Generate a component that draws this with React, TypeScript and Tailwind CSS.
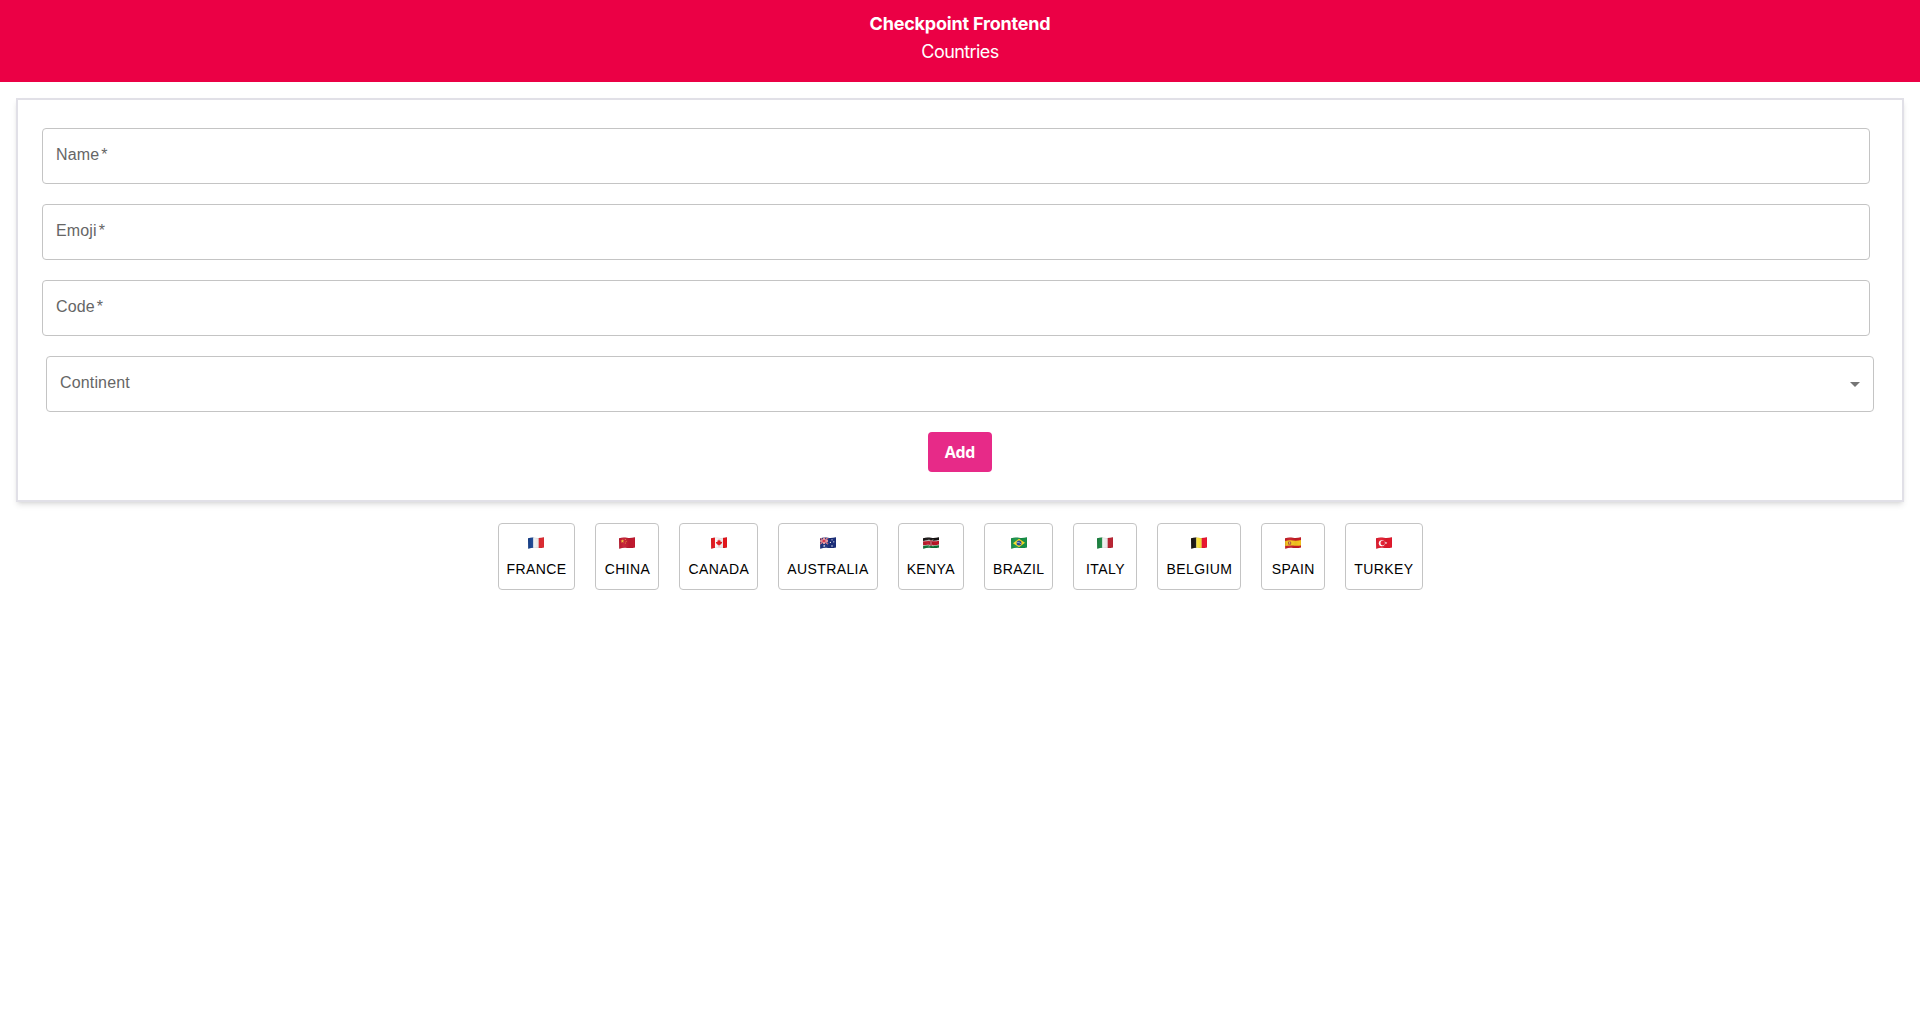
import React, { useId } from "react";

const WAVE = "M0 1.2C3 0.4 5 0.4 8 0.8S13 0.9 16 0.2V10.4C13 11.3 11 11.2 8 10.9S3 10.9 0.2 11.7Z";

const star = (cx: number, cy: number, r: number) =>
  Array.from({ length: 10 }, (_, i) => {
    const a = (Math.PI * i) / 5 - Math.PI / 2;
    const d = i % 2 ? r * 0.4 : r;
    return `${cx + d * Math.cos(a)},${cy + d * Math.sin(a)}`;
  }).join(" ");

const Vertical = ({ colors }: { colors: string[] }) => (
  <>
    {colors.map((c, i) => (
      <rect key={i} x={i * 5.34} width={5.5} height={12} fill={c} />
    ))}
  </>
);

const countries: { name: string; art: React.ReactNode }[] = [
  { name: "France", art: <Vertical colors={["#15418f", "#f4f4f4", "#e02c33"]} /> },
  {
    name: "China",
    art: (
      <>
        <rect width="16" height="12" fill="#c41a30" />
        <polygon points={star(3.4, 4.2, 1.9)} fill="#f5c83a" />
        <circle cx="6.4" cy="2.6" r=".5" fill="#e9a93a" />
        <circle cx="7.2" cy="4.2" r=".5" fill="#e9a93a" />
        <circle cx="6.4" cy="6" r=".5" fill="#e9a93a" />
      </>
    ),
  },
  {
    name: "Canada",
    art: (
      <>
        <rect width="16" height="12" fill="#f8f6f6" />
        <rect width="4" height="12" fill="#e6161c" />
        <rect x="12" width="4" height="12" fill="#e6161c" />
        <path d="M8 2.2L8.8 3.8L9.7 3.4L9.5 5L11.3 4.8L10.8 6.2L9.3 7.8L8.3 7.9V9.5H7.7V7.9L6.6 7.8L5.2 6.2L4.8 4.9L6.5 5L6.3 3.4L7.2 3.8Z" fill="#e6161c" />
      </>
    ),
  },
  {
    name: "Australia",
    art: (
      <>
        <rect width="16" height="12" fill="#1c2f7c" />
        <path d="M0 1L8 7M8 1L0 7" stroke="#dfe1ee" strokeWidth="1.4" />
        <path d="M4 0V7M0 4H8" stroke="#eee" strokeWidth="2" />
        <path d="M4 0V7M0 4H8M0 1L8 7M8 1L0 7" stroke="#d3263b" strokeWidth=".9" />
        <polygon points={star(4.2, 9, 1.2)} fill="#fff" />
        <circle cx="12" cy="2.8" r=".6" fill="#fff" />
        <circle cx="10.4" cy="5.4" r=".6" fill="#fff" />
        <circle cx="13.8" cy="4.8" r=".6" fill="#fff" />
        <circle cx="12" cy="9" r=".7" fill="#fff" />
      </>
    ),
  },
  {
    name: "Kenya",
    art: (
      <>
        <rect width="16" height="12" fill="#f1eeee" />
        <path d="M0 0H16V3Q12 4 8 3.5T0 3.9Z" fill="#171313" />
        <path d="M0 4.5Q4 3.6 8 4.1T16 3.7V7.5Q12 8.5 8 7.9T0 8.3Z" fill="#bd1627" />
        <path d="M0 9Q4 8 8 8.5T16 8.2V12H0Z" fill="#0c7334" />
        <path d="M5.8 2.2L10.2 9.8M10.2 2.2L5.8 9.8" stroke="#ded8d4" strokeWidth=".5" />
        <ellipse cx="8" cy="6" rx="1.5" ry="3" fill="#a01222" />
        <path d="M8 3V9" stroke="#f1dddd" strokeWidth=".6" />
      </>
    ),
  },
  {
    name: "Brazil",
    art: (
      <>
        <rect width="16" height="12" fill="#179348" />
        <path d="M2 6.2L8 1.7L14 5.8L8 10.3Z" fill="#f8dc25" />
        <circle cx="8" cy="6" r="2.5" fill="#254b9b" />
        <path d="M5.8 5.3Q8.2 5 10.2 7" stroke="#dfe5e8" strokeWidth=".6" fill="none" />
      </>
    ),
  },
  { name: "Italy", art: <Vertical colors={["#19843f", "#f6f5f5", "#bd2635"]} /> },
  { name: "Belgium", art: <Vertical colors={["#16120f", "#fde53a", "#ee1631"]} /> },
  {
    name: "Spain",
    art: (
      <>
        <rect width="16" height="12" fill="#c91c25" />
        <path d="M0 4Q4 3 8 3.5T16 3V8.4Q12 9.2 8 8.6T0 9Z" fill="#f8c71e" />
        <rect x="3" y="4.4" width="3.2" height="3.4" rx=".7" fill="#b0542b" />
        <rect x="4" y="5.2" width="1.1" height="1.4" fill="#d9b58a" />
      </>
    ),
  },
  {
    name: "Turkey",
    art: (
      <>
        <rect width="16" height="12" fill="#e51a2d" />
        <circle cx="5.8" cy="6.2" r="3" fill="#fff" />
        <circle cx="6.7" cy="6.1" r="2.3" fill="#e51a2d" />
        <polygon points={star(9.9, 6, 1.5)} fill="#fff" />
      </>
    ),
  },
];

function Flag({ children }: { children: React.ReactNode }) {
  const id = useId();
  return (
    <svg viewBox="0 0 16 12" className="h-3 w-4">
      <defs>
        <clipPath id={id}>
          <path d={WAVE} />
        </clipPath>
        <linearGradient id={id + "s"}>
          <stop offset="0" stopColor="#000" stopOpacity=".06" />
          <stop offset=".3" stopColor="#fff" stopOpacity=".06" />
          <stop offset=".65" stopColor="#000" stopOpacity=".06" />
          <stop offset="1" stopColor="#000" stopOpacity="0" />
        </linearGradient>
      </defs>
      <g clipPath={`url(#${id})`}>
        {children}
        <rect width="16" height="12" fill={`url(#${id}s)`} />
        <path d={WAVE} fill="none" stroke="#000" strokeOpacity=".15" strokeWidth=".6" />
      </g>
    </svg>
  );
}

function TextField({ label }: { label: string }) {
  return (
    <div className="mr-2 flex h-14 items-center rounded border border-[#c4c4c4] pb-0.5 pl-[13px] text-base tracking-[0.15px] text-[#666]">
      <span>{label}</span>
      <span className="ml-0.5">*</span>
    </div>
  );
}

export default function App() {
  return (
    <div className="min-h-screen bg-white font-['Liberation_Sans',Arial,sans-serif]">
      <header className="flex h-[82px] flex-col items-center bg-[#eb0045] pt-2.5 font-[Inter,sans-serif] text-white">
        <h1 className="text-[18px] leading-7 font-bold tracking-[-0.2px]">Checkpoint Frontend</h1>
        <p className="text-[18px] leading-7 tracking-[-0.58px]">Countries</p>
      </header>
      <form className="mx-4 mt-4 flex h-[404px] flex-col gap-5 border-2 border-[#e1e0e7] px-6 pt-7 shadow-md">
        <TextField label="Name" />
        <TextField label="Emoji" />
        <TextField label="Code" />
        <div className="mx-1 flex h-14 items-center justify-between rounded border border-[#c4c4c4] pr-1.5 pl-[13px] text-base tracking-[0.15px] text-[#666]">
          <span className="pb-0.5">Continent</span>
          <svg viewBox="0 0 24 24" className="size-6 fill-[#757575]">
            <path d="M7 10l5 5 5-5z" />
          </svg>
        </div>
        <button type="button" className="h-10 w-16 self-center rounded bg-[#e72a88] font-['Open_Sans',sans-serif] text-base font-bold tracking-[-0.3px] text-white">
          Add
        </button>
      </form>
      <div className="mt-[21px] flex justify-center gap-5">
        {countries.map((c) => (
          <button
            key={c.name}
            type="button"
            className="flex h-[67px] min-w-16 flex-col items-center rounded border border-[#c4c4c4] px-2 pt-[13px] text-sm leading-6 tracking-[0.4px] text-black uppercase"
          >
            <Flag>{c.art}</Flag>
            <span className="mt-2">{c.name}</span>
          </button>
        ))}
      </div>
    </div>
  );
}
